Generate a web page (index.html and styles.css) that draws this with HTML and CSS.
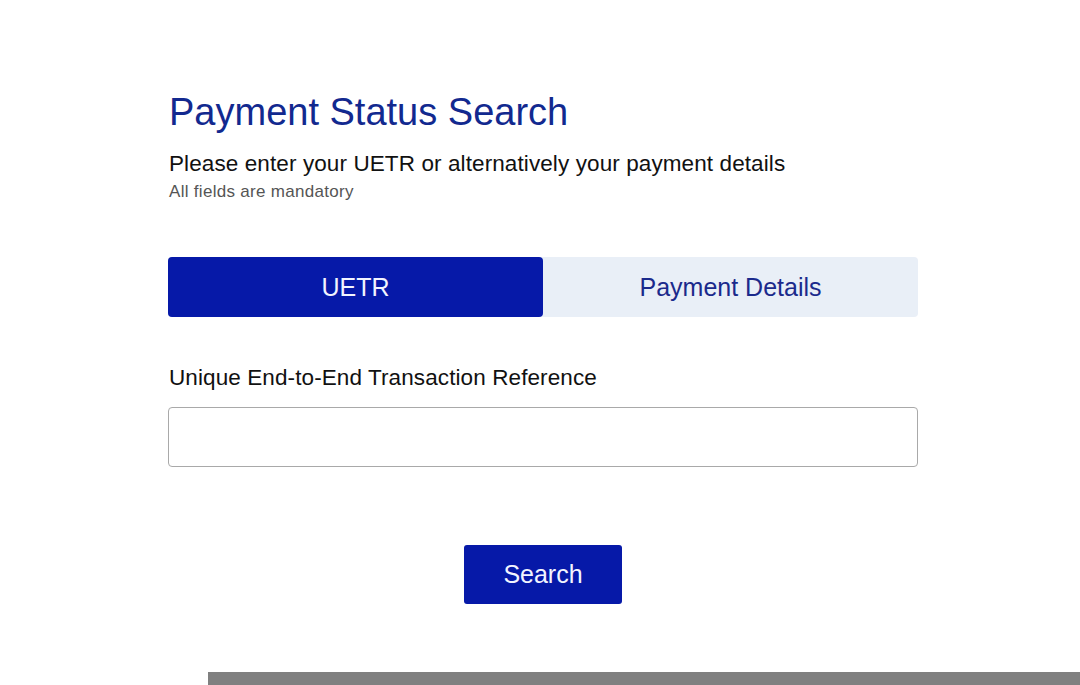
FILE: index.html
```html
<!DOCTYPE html>
<html lang="en">
<head>
<meta charset="utf-8">
<title>Payment Status Search</title>
<link rel="stylesheet" href="styles.css">
</head>
<body>
<main class="page">
  <h1 class="title">Payment Status Search</h1>
  <p class="intro">Please enter your UETR or alternatively your payment details</p>
  <p class="note">All fields are mandatory</p>

  <div class="tabs" role="tablist">
    <button class="tab tab-active" role="tab">UETR</button>
    <button class="tab" role="tab">Payment Details</button>
  </div>

  <label class="field-label" for="uetr">Unique End-to-End Transaction Reference</label>
  <input class="field-input" id="uetr" type="text">

  <div class="actions">
    <button class="search-btn">Search</button>
  </div>
</main>
<div class="bottom-bar"></div>
</body>
</html>
```

FILE: styles.css
```css
html, body {
  margin: 0;
  padding: 0;
  background: #ffffff;
}

body {
  font-family: "Liberation Sans", Arial, Helvetica, sans-serif;
  color: #111111;
  overflow: hidden;
}

.page {
  width: 750px;
  padding: 93px 0 0 168px;
  display: flex;
  flex-direction: column;
}

.title {
  margin: 0 0 0 1px;
  font-size: 38px;
  line-height: 38px;
  font-weight: 400;
  color: #12298f;
}

.intro {
  margin: 21.5px 0 0 1px;
  font-size: 22.5px;
  line-height: 22.5px;
  letter-spacing: 0.1px;
  color: #111111;
}

.note {
  margin: 8px 0 0 1px;
  font-size: 17px;
  line-height: 17px;
  letter-spacing: 0.3px;
  color: #555555;
}

.tabs {
  margin-top: 57px;
  display: flex;
  height: 60px;
  background: #e9eff7;
  border-radius: 4px;
}

.tab {
  flex: 1 1 0;
  border: 0;
  margin: 0;
  padding: 0;
  background: transparent;
  font-family: inherit;
  font-size: 25px;
  color: #1b2a8c;
  border-radius: 4px;
  cursor: pointer;
}

.tab-active {
  background: #0619a8;
  color: #f2f4ff;
}

.field-label {
  margin: 50px 0 0 1px;
  font-size: 22.5px;
  line-height: 22.5px;
  letter-spacing: 0.1px;
  color: #111111;
}

.field-input {
  margin-top: 17.5px;
  box-sizing: border-box;
  height: 60px;
  width: 100%;
  border: 1px solid #a9a9a9;
  border-radius: 4px;
  background: #ffffff;
  font-family: inherit;
  font-size: 20px;
  padding: 0 12px;
}

.actions {
  margin-top: 78px;
  display: flex;
  justify-content: center;
}

.search-btn {
  width: 158px;
  height: 59px;
  border: 0;
  border-radius: 3px;
  background: #0619a8;
  color: #f2f4ff;
  font-family: inherit;
  font-size: 25px;
  cursor: pointer;
}

.bottom-bar {
  margin: 68px 0 0 208px;
  height: 20px;
  background: #808080;
}
```
